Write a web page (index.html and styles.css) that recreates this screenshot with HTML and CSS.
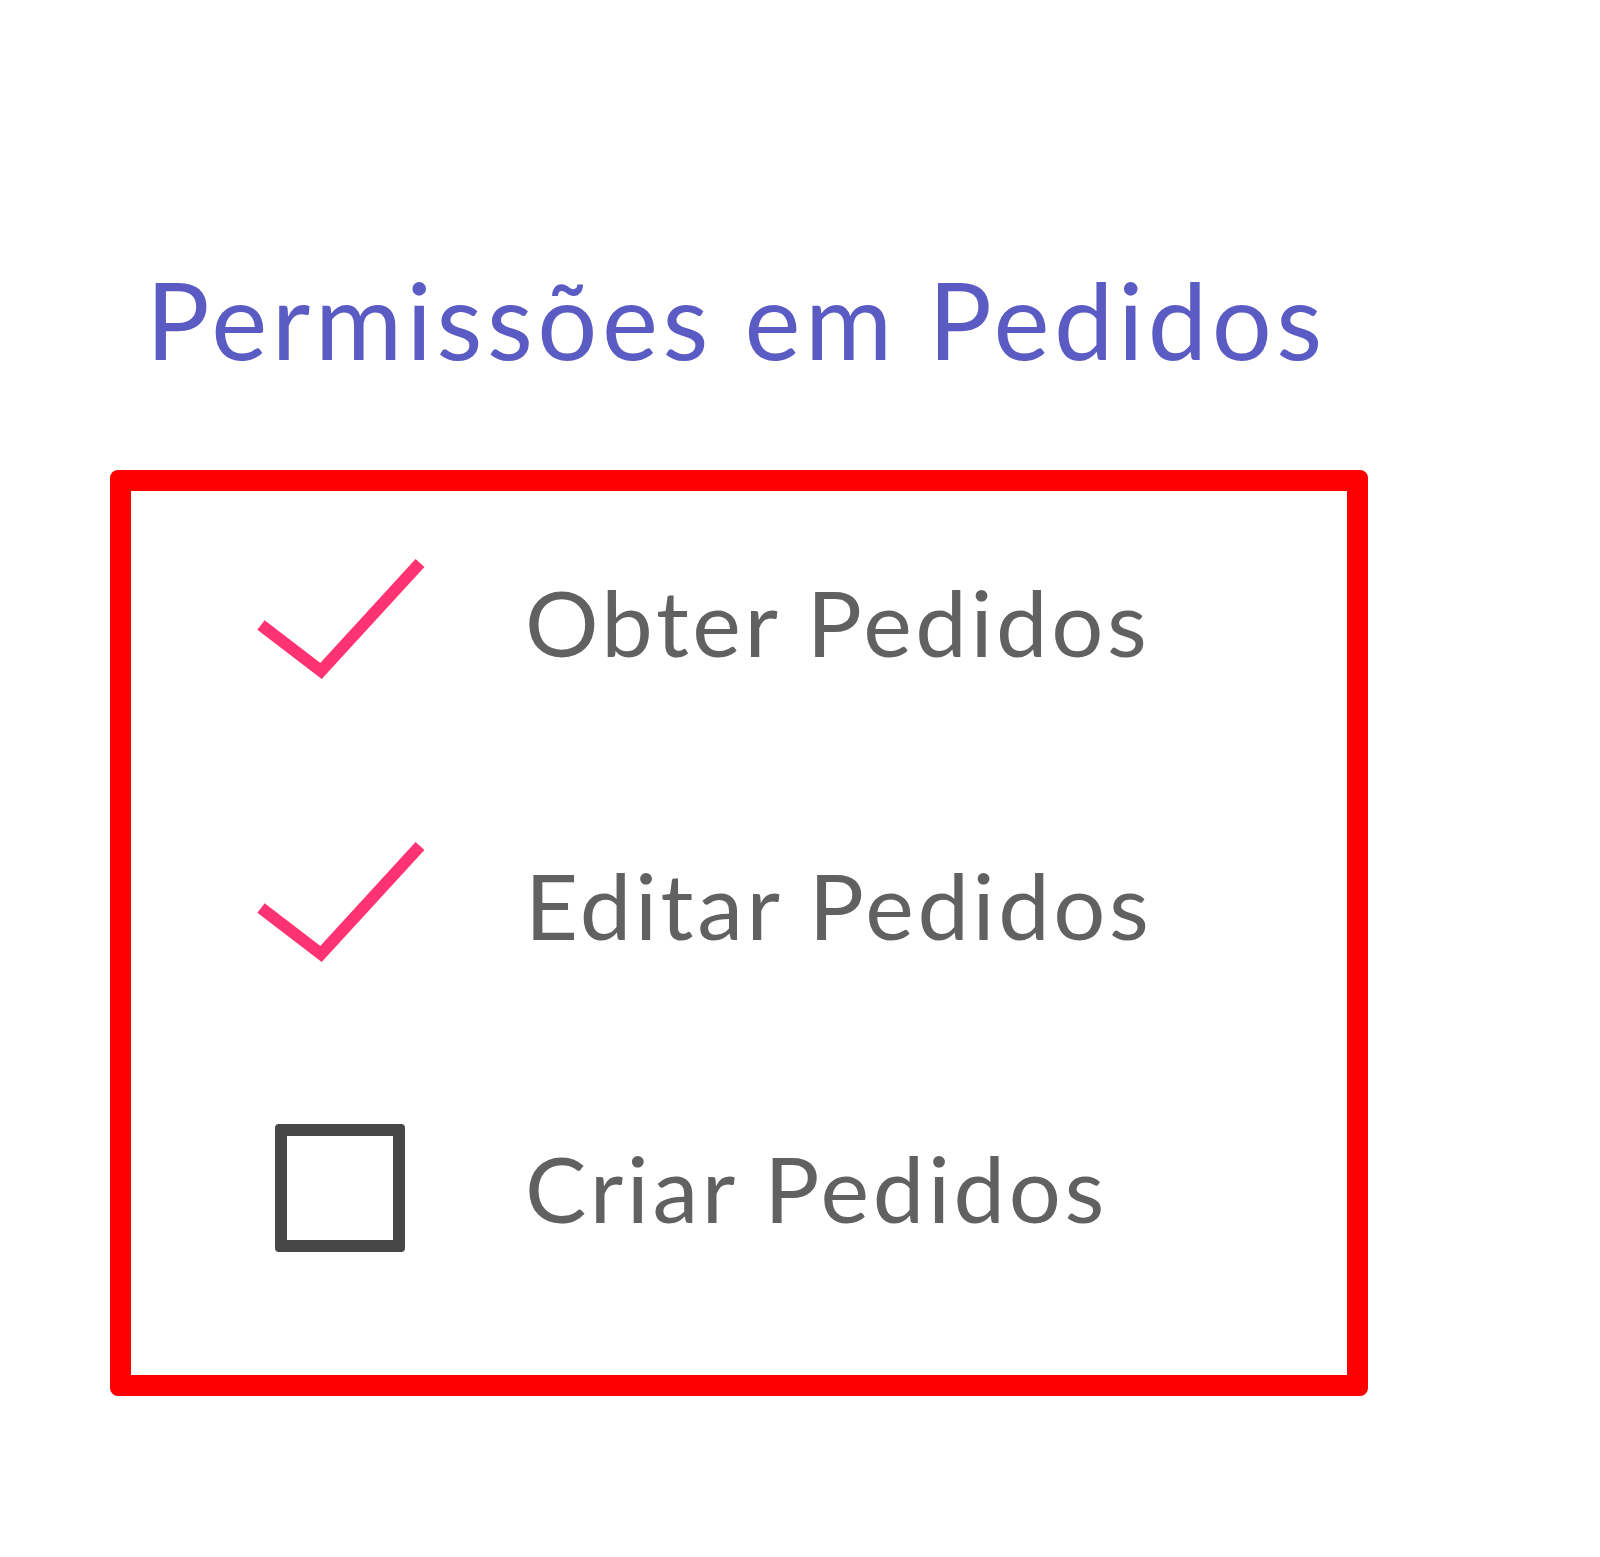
FILE: index.html
```html
<!DOCTYPE html>
<html lang="pt-BR">
<head>
    <meta charset="UTF-8">
    <meta name="viewport" content="width=device-width, initial-scale=1.0">
    <title>Permissões em Pedidos</title>
    <link rel="stylesheet" href="styles.css">
</head>
<body>
    <div class="pagina">
        <h2 class="titulo">Permissões em Pedidos</h2>

        <div class="permissoes">
            <div class="permissao">
                <div class="icone">
                    <svg width="170" height="130" viewBox="0 0 170 130">
                        <polyline points="6,68 66,114 165,6" fill="none" stroke="#ff3374" stroke-width="12" stroke-linejoin="miter"/>
                    </svg>
                </div>
                <span class="nome">Obter Pedidos</span>
            </div>
            <div class="permissao">
                <div class="icone">
                    <svg width="170" height="130" viewBox="0 0 170 130">
                        <polyline points="6,68 66,114 165,6" fill="none" stroke="#ff3374" stroke-width="12" stroke-linejoin="miter"/>
                    </svg>
                </div>
                <span class="nome">Editar Pedidos</span>
            </div>
            <div class="permissao">
                <div class="icone">
                    <div class="caixa"></div>
                </div>
                <span class="nome">Criar Pedidos</span>
            </div>
        </div>
    </div>
</body>
</html>
```

FILE: styles.css
```css
body {
    margin: 0;
    background-color: #fff;
    font-family: 'Lato', 'Open Sans', sans-serif;
}

.pagina {
    padding: 266px 0 0 110px;
}

.titulo {
    margin: 0 0 98px 36px;
    font-size: 106px;
    font-weight: normal;
    line-height: 1;
    letter-spacing: 4.5px;
    color: #5b5bc4;
}

.permissoes {
    box-sizing: border-box;
    width: 1258px;
    height: 926px;
    border: 21px solid #ff0000;
    border-radius: 8px;
    padding-top: 31px;
    display: flex;
    flex-direction: column;
    gap: 83px;
}

.permissao {
    height: 200px;
    display: flex;
    align-items: center;
}

.icone {
    width: 170px;
    height: 130px;
    margin-left: 124px;
    margin-right: 100px;
    display: flex;
    align-items: center;
    justify-content: center;
}

.icone svg {
    display: block;
}

.caixa {
    box-sizing: border-box;
    width: 130px;
    height: 128px;
    border: 12px solid #474747;
    border-radius: 4px;
}

.nome {
    font-size: 92px;
    line-height: 1;
    letter-spacing: 3.6px;
    color: #616161;
}
```
